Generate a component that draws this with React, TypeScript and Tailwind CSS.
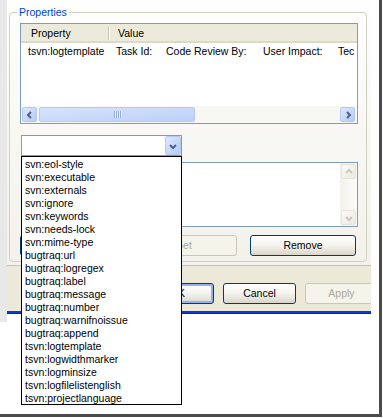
import React from "react";

const propNames = [
	"svn:eol-style",
	"svn:executable",
	"svn:externals",
	"svn:ignore",
	"svn:keywords",
	"svn:needs-lock",
	"svn:mime-type",
	"bugtraq:url",
	"bugtraq:logregex",
	"bugtraq:label",
	"bugtraq:message",
	"bugtraq:number",
	"bugtraq:warnifnoissue",
	"bugtraq:append",
	"tsvn:logtemplate",
	"tsvn:logwidthmarker",
	"tsvn:logminsize",
	"tsvn:logfilelistenglish",
	"tsvn:projectlanguage",
];

type Dir = "left" | "right" | "up" | "down";

function Chevron({ dir, color }: { dir: Dir; color: string }) {
	const pts: Record<Dir, string> = {
		left: "5,1 2,4 5,7",
		right: "3,1 6,4 3,7",
		up: "1,5 4,2 7,5",
		down: "1,3 4,6 7,3",
	};
	return (
		<svg width="8" height="8" viewBox="0 0 8 8">
			<polyline points={pts[dir]} fill="none" stroke={color} strokeWidth="2" />
		</svg>
	);
}

function ScrollButton({ dir, disabled = false }: { dir: Dir; disabled?: boolean }) {
	if (disabled) {
		return (
			<div className="flex h-[15px] w-[15px] items-center justify-center rounded-[2px] border border-[#e6e4da] bg-linear-to-br from-[#fbfbf8] to-[#ebe9df]">
				<Chevron dir={dir} color="#c9c7ba" />
			</div>
		);
	}
	return (
		<div className="flex h-full w-[15px] items-center justify-center rounded-[2px] border border-[#b4c8f4] bg-linear-to-br from-[#dde7fe] to-[#b6cbf8]">
			<Chevron dir={dir} color="#4d6185" />
		</div>
	);
}

function XpButton({
	label,
	width,
	variant = "normal",
}: {
	label: string;
	width: string;
	variant?: "normal" | "default" | "disabled";
}) {
	if (variant === "disabled") {
		return (
			<div
				className={`${width} flex h-[21px] shrink-0 items-center justify-center rounded-[3px] border border-[#c9c7ba] bg-[#f5f4ea] text-[#aca899]`}
			>
				{label}
			</div>
		);
	}
	return (
		<div
			className={`${width} flex h-[21px] shrink-0 items-center justify-center rounded-[3px] border border-[#003c74] bg-linear-to-b from-[#ffffff] via-[#f4f3ee] to-[#d9d5ca] ${
				variant === "default" ? "shadow-[inset_0_0_0_2px_#93b1ee]" : ""
			}`}
		>
			{label}
		</div>
	);
}

export default function App() {
	return (
		<div className="relative h-[418px] w-[383px] overflow-hidden bg-white font-['Liberation_Sans',Arial,sans-serif] text-[10.5px] leading-[13px] text-black">
			<div className="h-[417px] w-[382px] border-r-[3px] border-b-[3px] border-[#4b4b4b]">
				<div className="flex">
					<div className="h-[322px] w-[7px] bg-[#e8e8e8]" />
					<div className="flex h-[314px] w-[364px] flex-col overflow-hidden">
						{/* tab page */}
						<div className="h-[266px] border-b border-[#c4c2b4] bg-linear-to-b from-[#fefefe] to-[#f2f1eb] pt-[12px] pl-[2px]">
							<div className="relative h-[250px] w-[358px] rounded-[4px] border border-[#d0d0bf] pt-[10px] pl-[10px]">
								<span className="absolute top-[-7px] left-[7px] bg-[#fdfdfc] px-[2px] text-[#0046d5]">
									Properties
								</span>

								{/* list view */}
								<div className="flex h-[101px] w-[338px] flex-col overflow-hidden border border-[#7f9db9] bg-white">
									<div className="flex h-[19px] shrink-0 items-center bg-[#ebeadb] shadow-[inset_0_-2px_0_#dcd9c8]">
										<div className="w-[87px] pl-[10px]">Property</div>
										<div className="h-[13px] w-[2px] border-l border-[#c7c5b2] bg-white" />
										<div className="pl-[8px]">Value</div>
									</div>
									<div className="mt-[1px] flex h-[15px] shrink-0 items-center whitespace-nowrap">
										<div className="w-[87px] shrink-0 pl-[7px]">tsvn:logtemplate</div>
										<div className="flex pl-[8px]">
											<span className="w-[50px] shrink-0">Task Id:</span>
											<span className="w-[97px] shrink-0">Code Review By:</span>
											<span className="w-[75px] shrink-0">User Impact:</span>
											<span className="shrink-0">Tec</span>
										</div>
									</div>
									<div className="flex-1" />
									<div className="flex h-[17px] shrink-0 bg-[#f7f7f3] py-[1px] pr-[2px] pl-[1px]">
										<ScrollButton dir="left" />
										<div className="ml-[2px] flex w-[156px] items-center justify-center rounded-[2px] border border-[#b4c8f4] bg-linear-to-br from-[#d7e3fd] to-[#bcd0f9]">
											<div className="flex gap-[1px]">
												{[0, 1, 2, 3].map((i) => (
													<div key={i} className="h-[7px] w-[1px] bg-[#8ea8e0] shadow-[1px_0_0_#eef3ff]" />
												))}
											</div>
										</div>
										<div className="flex-1" />
										<ScrollButton dir="right" />
									</div>
								</div>

								{/* combo */}
								<div className="mt-[11px] ml-[1px] flex h-[21px] w-[161px] justify-end border border-[#7f9db9] bg-white">
									<div className="flex h-full w-[16px] items-center justify-center rounded-[2px] border border-[#b4c8f4] bg-linear-to-br from-[#dde7fe] to-[#b6cbf8]">
										<Chevron dir="down" color="#4d6185" />
									</div>
								</div>

								{/* value edit */}
								<div className="mt-[6px] ml-[1px] flex h-[65px] w-[337px] justify-end border border-[#7f9db9] bg-white">
									<div className="flex h-full w-[17px] flex-col justify-between bg-linear-to-r from-[#f3f2ec] to-[#fbfbf9] p-[1px]">
										<ScrollButton dir="up" disabled />
										<ScrollButton dir="down" disabled />
									</div>
								</div>

								{/* buttons (first one sits under the open list) */}
								<div className="mt-[8px] flex">
									<XpButton label="" width="w-[106px]" variant="default" />
									<div className="ml-[5px]">
										<XpButton label="Set" width="w-[106px]" variant="disabled" />
									</div>
									<div className="ml-[13px]">
										<XpButton label="Remove" width="w-[106px]" />
									</div>
								</div>
							</div>
						</div>

						{/* dialog buttons */}
						<div className="flex h-[45px] gap-[9px] bg-[#ece9d8] pt-[17px] pl-[134px]">
							<XpButton label="OK" width="w-[73px]" variant="default" />
							<XpButton label="Cancel" width="w-[73px]" />
							<XpButton label="Apply" width="w-[73px]" variant="disabled" />
						</div>
						<div className="h-[3px] bg-[#0b37d6] shadow-[inset_0_-1px_0_#0626a8]" />
					</div>
				</div>
			</div>

			{/* open dropdown list */}
			<div className="absolute top-[156px] left-[21px] h-[249px] w-[161px] border border-black bg-white pt-[1px]">
				{propNames.map((name) => (
					<div key={name} className="h-[13px] pl-[3px] leading-[13px] whitespace-nowrap">
						{name}
					</div>
				))}
			</div>
		</div>
	);
}
